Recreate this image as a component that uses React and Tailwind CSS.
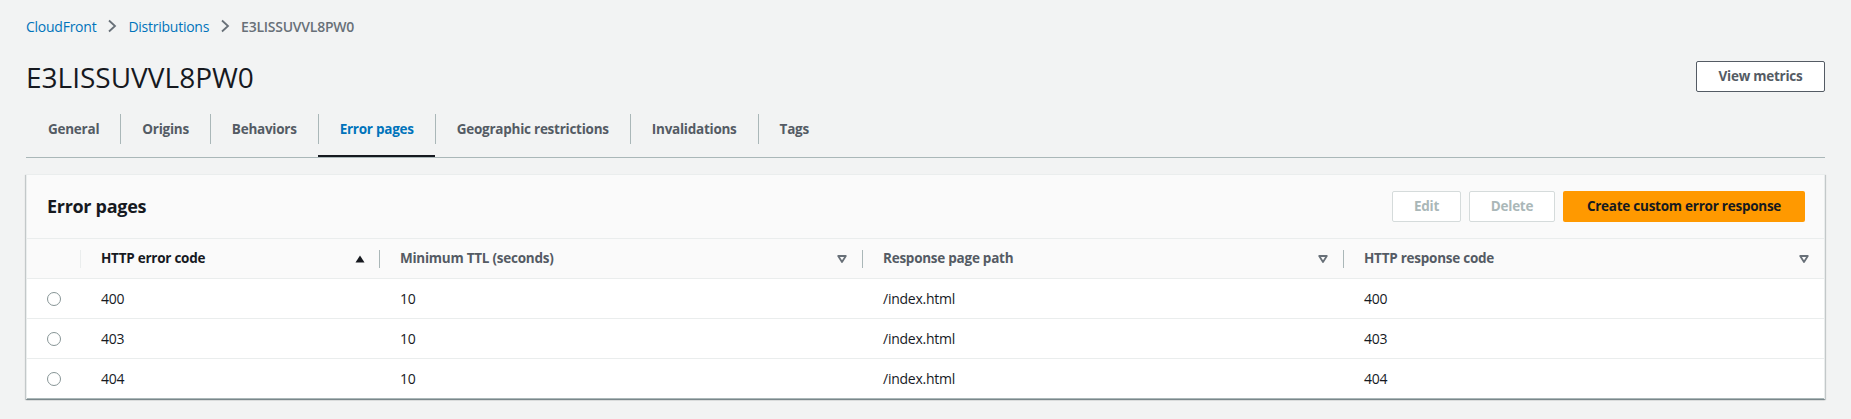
import React from 'react';

const TABS = ['General', 'Origins', 'Behaviors', 'Error pages', 'Geographic restrictions', 'Invalidations', 'Tags'];
const ACTIVE = 'Error pages';

const ROWS = [
  { code: '400', ttl: '10', path: '/index.html', resp: '400' },
  { code: '403', ttl: '10', path: '/index.html', resp: '403' },
  { code: '404', ttl: '10', path: '/index.html', resp: '404' },
];

// bold labels in the console run a bit narrower than Open Sans bold
const BOLD = 'font-bold text-[13.5px] tracking-[-0.25px]';

function Chevron() {
  return (
    <svg width="10" height="14" viewBox="0 0 10 14" className="mx-[11px] shrink-0">
      <polyline points="2,1.5 8,7 2,12.5" fill="none" stroke="#687078" strokeWidth="1.8" strokeLinejoin="miter" />
    </svg>
  );
}

function SortAsc() {
  return (
    <svg width="10" height="8" viewBox="0 0 10 8" className="shrink-0">
      <polygon points="5,0.5 9.5,7.5 0.5,7.5" fill="#16191f" />
    </svg>
  );
}

function SortNone() {
  return (
    <svg width="10" height="8" viewBox="0 0 10 8" className="shrink-0">
      <polygon points="1.2,1 8.8,1 5,7" fill="none" stroke="#687078" strokeWidth="1.8" strokeLinejoin="round" />
    </svg>
  );
}

function HeadCell({ label, sorted, light, pr = 'pr-[15px]' }) {
  return (
    <div className={`h-[40px] bg-[#fafafa] border-b border-[#eaeded] flex items-center ${pr}`}>
      <span className={`w-px h-[18px] shrink-0 ${light ? 'bg-[#eaeded]' : 'bg-[#aab7b8]'}`} />
      <span className={`ml-[20px] flex-1 ${BOLD} ${sorted ? 'text-[#16191f]' : 'text-[#545b64]'}`}>{label}</span>
      {sorted ? <SortAsc /> : <SortNone />}
    </div>
  );
}

export default function App() {
  return (
    <div className="min-h-screen bg-[#f2f3f3] px-[26px] pt-[16px] font-['Open_Sans',sans-serif] text-[14px] tracking-[-0.25px] text-[#16191f]">
      {/* breadcrumb */}
      <nav className="flex items-center h-[20px]">
        <span className="text-[#0073bb]">CloudFront</span>
        <Chevron />
        <span className="text-[#0073bb]">Distributions</span>
        <Chevron />
        <span className="text-[#687078] font-semibold">E3LISSUVVL8PW0</span>
      </nav>

      {/* header */}
      <div className="flex items-center justify-between mt-[25px] h-[31px]">
        <h1 className="text-[28px] leading-none tracking-normal text-[#16191f]">E3LISSUVVL8PW0</h1>
        <button className={`h-[31px] w-[129px] border border-[#545b64] rounded-[2px] bg-white text-[#545b64] ${BOLD}`}>
          View metrics
        </button>
      </div>

      {/* tabs */}
      <div className="flex mt-[15px] border-b border-[#aab7b8]">
        {TABS.map((t, i) => (
          <div
            key={t}
            className={`pt-[7px] pb-[11px] border-b-2 ${t === ACTIVE ? 'border-[#16191f]' : 'border-transparent'}`}
          >
            <div
              className={`h-[30px] flex items-center px-[21px] ${BOLD} border-l ${i > 0 ? 'border-[#aab7b8]' : 'border-transparent'} ${
                t === ACTIVE ? 'text-[#0073bb]' : 'text-[#545b64]'
              }`}
            >
              {t}
            </div>
          </div>
        ))}
      </div>

      {/* error pages panel */}
      <div className="mt-[16px] bg-white border-t border-x border-[#eaeded] shadow-[0_1px_1px_0_rgba(0,28,36,0.3),1px_1px_1px_0_rgba(0,28,36,0.15),-1px_1px_1px_0_rgba(0,28,36,0.15)]">
        <div className="h-[64px] flex items-center justify-between pl-[20px] pr-[19px] bg-[#fafafa] border-b border-[#eaeded]">
          <h2 className="text-[18px] font-bold tracking-[-0.3px] text-[#16191f]">Error pages</h2>
          <div className="flex items-center gap-[8px]">
            <button className={`h-[31px] w-[69px] border border-[#d5dbdb] rounded-[2px] bg-white text-[#aab7b8] ${BOLD}`}>
              Edit
            </button>
            <button className={`h-[31px] w-[86px] border border-[#d5dbdb] rounded-[2px] bg-white text-[#aab7b8] ${BOLD}`}>
              Delete
            </button>
            <button className={`h-[31px] w-[242px] rounded-[2px] bg-[#ff9900] text-[#16191f] ${BOLD}`}>
              Create custom error response
            </button>
          </div>
        </div>

        <div className="grid grid-cols-[53px_299px_483px_481px_1fr]">
          {/* table header */}
          <div className="h-[40px] bg-[#fafafa] border-b border-[#eaeded]" />
          <HeadCell label="HTTP error code" sorted light pr="pr-[14px]" />
          <HeadCell label="Minimum TTL (seconds)" />
          <HeadCell label="Response page path" />
          <HeadCell label="HTTP response code" />

          {ROWS.map((r, i) => {
            const b = i < ROWS.length - 1 ? 'border-b border-[#eaeded]' : 'border-b border-[#aab7b8]';
            return (
              <React.Fragment key={r.code}>
                <div className={`h-[40px] flex items-center justify-center ${b}`}>
                  <span className="w-[14px] h-[14px] rounded-full border-[1.5px] border-[#879596] bg-white" />
                </div>
                <div className={`h-[40px] flex items-center pl-[21px] ${b}`}>{r.code}</div>
                <div className={`h-[40px] flex items-center pl-[21px] ${b}`}>{r.ttl}</div>
                <div className={`h-[40px] flex items-center pl-[21px] ${b}`}>{r.path}</div>
                <div className={`h-[40px] flex items-center pl-[21px] ${b}`}>{r.resp}</div>
              </React.Fragment>
            );
          })}
        </div>
      </div>
    </div>
  );
}
